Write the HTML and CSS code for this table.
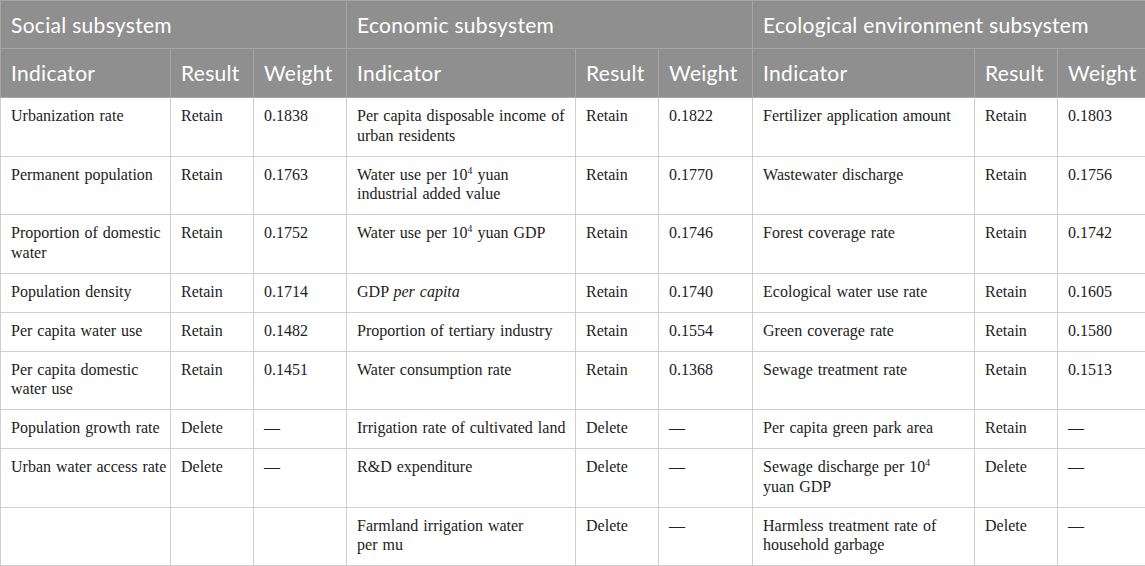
FILE: index.html
```html
<!DOCTYPE html>
<html lang="en">
<head>
    <meta charset="UTF-8">
    <meta name="viewport" content="width=device-width, initial-scale=1.0">
    <title>Indicator screening results</title>
    <link rel="stylesheet" href="styles.css">
</head>
<body>
    <table class="data-table">
        <colgroup>
            <col class="c-ind1"><col class="c-res"><col class="c-w1">
            <col class="c-ind2"><col class="c-res"><col class="c-w2">
            <col class="c-ind3"><col class="c-res"><col class="c-w3">
        </colgroup>
        <thead>
            <tr class="group-row">
                <th colspan="3">Social subsystem</th>
                <th colspan="3">Economic subsystem</th>
                <th colspan="3">Ecological environment subsystem</th>
            </tr>
            <tr class="label-row">
                <th>Indicator</th><th>Result</th><th>Weight</th>
                <th>Indicator</th><th>Result</th><th>Weight</th>
                <th>Indicator</th><th>Result</th><th>Weight</th>
            </tr>
        </thead>
        <tbody>
            <tr>
                <td>Urbanization rate</td><td>Retain</td><td>0.1838</td>
                <td>Per capita disposable income of<br>urban residents</td><td>Retain</td><td>0.1822</td>
                <td>Fertilizer application amount</td><td>Retain</td><td>0.1803</td>
            </tr>
            <tr>
                <td>Permanent population</td><td>Retain</td><td>0.1763</td>
                <td>Water use per 10<sup>4</sup> yuan<br>industrial added value</td><td>Retain</td><td>0.1770</td>
                <td>Wastewater discharge</td><td>Retain</td><td>0.1756</td>
            </tr>
            <tr>
                <td>Proportion of domestic<br>water</td><td>Retain</td><td>0.1752</td>
                <td>Water use per 10<sup>4</sup> yuan GDP</td><td>Retain</td><td>0.1746</td>
                <td>Forest coverage rate</td><td>Retain</td><td>0.1742</td>
            </tr>
            <tr>
                <td>Population density</td><td>Retain</td><td>0.1714</td>
                <td>GDP <em>per capita</em></td><td>Retain</td><td>0.1740</td>
                <td>Ecological water use rate</td><td>Retain</td><td>0.1605</td>
            </tr>
            <tr>
                <td>Per capita water use</td><td>Retain</td><td>0.1482</td>
                <td>Proportion of tertiary industry</td><td>Retain</td><td>0.1554</td>
                <td>Green coverage rate</td><td>Retain</td><td>0.1580</td>
            </tr>
            <tr>
                <td>Per capita domestic<br>water use</td><td>Retain</td><td>0.1451</td>
                <td>Water consumption rate</td><td>Retain</td><td>0.1368</td>
                <td>Sewage treatment rate</td><td>Retain</td><td>0.1513</td>
            </tr>
            <tr>
                <td>Population growth rate</td><td>Delete</td><td>—</td>
                <td>Irrigation rate of cultivated land</td><td>Delete</td><td>—</td>
                <td>Per capita green park area</td><td>Retain</td><td>—</td>
            </tr>
            <tr>
                <td>Urban water access rate</td><td>Delete</td><td>—</td>
                <td>R&amp;D expenditure</td><td>Delete</td><td>—</td>
                <td>Sewage discharge per 10<sup>4</sup><br>yuan GDP</td><td>Delete</td><td>—</td>
            </tr>
            <tr>
                <td></td><td></td><td></td>
                <td>Farmland irrigation water<br>per mu</td><td>Delete</td><td>—</td>
                <td>Harmless treatment rate of<br>household garbage</td><td>Delete</td><td>—</td>
            </tr>
        </tbody>
    </table>
</body>
</html>
```

FILE: styles.css
```css
body {
    margin: 0;
    background-color: #fff;
}
.data-table {
    width: 1145px;
    table-layout: fixed;
    border-collapse: collapse;
    font-family: "Liberation Serif", "Times New Roman", serif;
    font-size: 16px;
    color: #222;
}
.c-ind1 { width: 170px; }
.c-ind2 { width: 229px; }
.c-ind3 { width: 222px; }
.c-res { width: 83px; }
.c-w1 { width: 93px; }
.c-w2 { width: 94px; }
.c-w3 { width: 88px; }

.data-table th {
    background-color: #8f8f8f;
    color: #fff;
    font-family: Lato, "Open Sans", sans-serif;
    font-weight: normal;
    font-size: 21px;
    letter-spacing: 0.3px;
    line-height: 28px;
    text-align: left;
    padding: 10px;
    border: 1px solid #a6a6a6;
    white-space: nowrap;
}
.group-row th {
    padding-bottom: 9px;
}
.data-table td {
    padding: 8px 10px 10.5px;
    line-height: 19.5px;
    vertical-align: top;
    border: 1px solid #cfcfcf;
    word-spacing: 1px;
    white-space: nowrap;
}
.data-table sup {
    font-size: 0.6em;
    line-height: 0;
    vertical-align: 0.6em;
}
```
